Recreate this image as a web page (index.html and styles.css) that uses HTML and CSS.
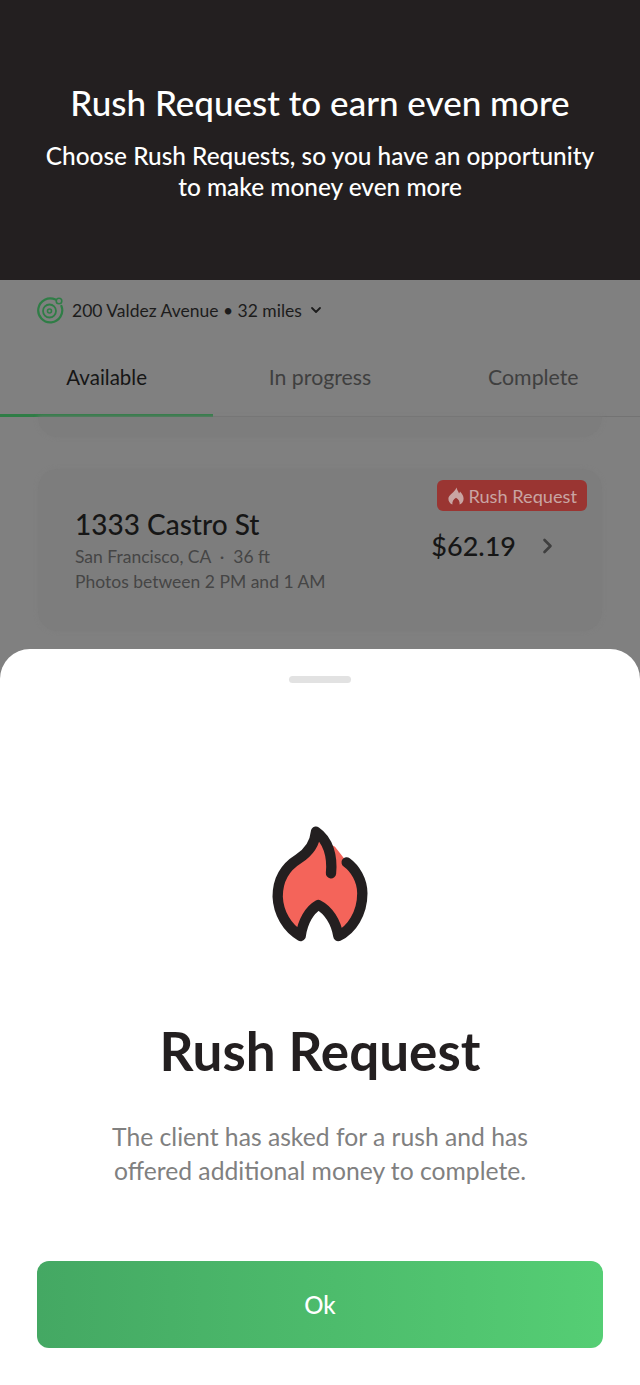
FILE: index.html
```html
<!DOCTYPE html>

<html>

<head>
  <meta charset="utf-8">
  <title>Rush Request</title>
  <link rel="stylesheet" href="styles.css">
</head>

<body>

  <div class="promo">
    <h1>Rush Request to earn even more</h1>
    <p>Choose Rush Requests, so you have an opportunity<br>to make money even more</p>
  </div>

  <div class="screen">
    <div class="location">
      <svg class="pin" width="28" height="28" viewBox="0 0 28 28" fill="none" stroke="#2f7d46">
        <path d="M19.5 3.6A12 12 0 1 0 25.4 10" stroke-width="2.2" stroke-linecap="round"/>
        <circle cx="13.5" cy="15" r="6.5" stroke-width="1.8"/>
        <circle cx="13.5" cy="15" r="2" stroke-width="1.6"/>
        <circle cx="23" cy="5" r="2.8" stroke-width="1.6"/>
      </svg>
      <span>200 Valdez Avenue • 32 miles</span>
      <svg width="12" height="12" viewBox="0 0 12 12" fill="none" stroke="#1c1c1c" stroke-width="1.8" stroke-linecap="round" stroke-linejoin="round">
        <path d="M2 4l4 4 4-4"/>
      </svg>
    </div>

    <div class="tabs">
      <div class="tab active">Available</div>
      <div class="tab">In progress</div>
      <div class="tab">Complete</div>
    </div>

    <div class="list">
      <div class="card-prev"></div>
      <div class="card">
        <div class="card-info">
          <h2>1333 Castro St</h2>
          <p>San Francisco, CA &nbsp;·&nbsp; 36 ft</p>
          <p>Photos between 2 PM and 1 AM</p>
        </div>
        <div class="card-side">
          <div class="badge">
            <svg width="16" height="18" viewBox="0 0 16 18" fill="#c9a5a3">
              <path d="M8.5 0.5C9 3.5 10.5 4 11 6.5C11.6 5.8 11.9 5.3 12 4.6C14.2 6.8 15.6 9.2 15.6 11.7C15.6 14.6 13.8 16.6 11.6 17.5C12 14.6 10.6 12.4 8 10.8C5.6 12.4 4 14.6 4.4 17.5C2 16.6 0.4 14.4 0.4 11.7C0.4 7.5 6.8 5.5 8.5 0.5Z"/>
            </svg>
            <span>Rush Request</span>
          </div>
          <div class="price-row">
            <span class="price">$62.19</span>
            <svg width="14" height="18" viewBox="0 0 14 18" fill="none" stroke="#3f3f3f" stroke-width="2.6" stroke-linecap="round" stroke-linejoin="round">
              <path d="M3.5 3l6 6-6 6"/>
            </svg>
          </div>
        </div>
      </div>
    </div>
  </div>

  <div class="sheet">
    <div class="handle"></div>
    <svg class="flame" width="140" height="150" viewBox="0 0 420 450" fill="none">
      <path d="M198 65C195 100 175 125 130 150C100 175 83 215 83 260C85 310 112 355 150 378C160 330 180 300 205 285C235 300 258 335 265 378C305 360 337 310 337 250C337 210 315 175 290 155L255 110L235 100Z" fill="#f4645a"/>
      <path d="M243 190C248 140 235 90 198 65C195 100 180 125 145 147C100 175 83 215 83 260C85 310 112 355 152 378C158 335 178 300 205 285C235 300 258 335 265 378C305 360 337 310 337 250C337 210 315 175 290 157" stroke="#231f20" stroke-width="31" stroke-linecap="round" stroke-linejoin="round"/>
    </svg>
    <h2>Rush Request</h2>
    <p>The client has asked for a rush and has<br>offered additional money to complete.</p>
    <button class="ok">Ok</button>
  </div>

</body>

</html>
```

FILE: styles.css
```css
body {
  margin: 0;
  padding: 0;
  height: 1385px;
  display: flex;
  flex-direction: column;
  overflow: hidden;
  background-color: #808080;
  font-family: "Lato", sans-serif;
  color: #1c1c1c;
}

h1,
h2,
p {
  margin: 0;
  font-weight: 400;
}

.promo {
  height: 280px;
  box-sizing: border-box;
  padding-top: 79px;
  background-color: #231f20;
  color: #ffffff;
  text-align: center;
}

.promo h1 {
  font-size: 35px;
  line-height: 46px;
  font-weight: 500;
}

.promo p {
  margin-top: 15px;
  font-size: 24.4px;
  line-height: 31px;
  font-weight: 500;
}

.screen {
  height: 369px;
  overflow: hidden;
}

.location {
  display: flex;
  align-items: center;
  height: 60px;
  padding-left: 36px;
  font-size: 17.5px;
  gap: 8px;
}

.tabs {
  display: flex;
  height: 76px;
  border-bottom: 1px solid #737373;
}

.tab {
  flex: 1;
  box-sizing: border-box;
  padding-top: 22px;
  text-align: center;
  font-size: 21.3px;
  line-height: 30px;
  color: #3f3f3f;
}

.tab.active {
  color: #161616;
  font-size: 20.5px;
  border-bottom: 3px solid #2f7d46;
  height: 77px;
}

.list {
  display: flex;
  flex-direction: column;
  gap: 32px;
  padding: 0 38px;
}

.card-prev {
  height: 20px;
  background-color: #7d7d7d;
  border-radius: 0 0 20px 20px;
  box-shadow: 0 0 4px #7d7d7d;
}

.card {
  display: flex;
  justify-content: space-between;
  height: 162px;
  box-sizing: border-box;
  padding: 11px 15px 0 37px;
  background-color: #7d7d7d;
  border-radius: 20px;
  box-shadow: 0 0 4px #7d7d7d;
}

.card-info {
  padding-top: 25px;
}

.card-info h2 {
  font-size: 28px;
  line-height: 38px;
  font-weight: 500;
  color: #161616;
}

.card-info p {
  font-size: 17.5px;
  line-height: 25px;
  color: #454545;
}

.card-info h2 + p {
  margin-top: 1px;
}

.card-side {
  display: flex;
  flex-direction: column;
  align-items: flex-end;
}

.badge {
  display: flex;
  align-items: center;
  gap: 4px;
  height: 31px;
  padding: 0 10px 0 11px;
  background-color: #9a3532;
  border-radius: 6px;
  color: #c9a5a3;
  font-size: 18.2px;
}

.price-row {
  display: flex;
  align-items: center;
  gap: 25px;
  margin-top: 15px;
  padding-right: 32px;
}

.price {
  font-size: 27px;
  line-height: 40px;
  font-weight: 500;
  color: #161616;
}

.sheet {
  flex: 1;
  display: flex;
  flex-direction: column;
  align-items: center;
  background-color: #ffffff;
  border-radius: 30px 30px 0 0;
  padding: 0 37px;
}

.handle {
  width: 62px;
  height: 7px;
  margin-top: 27px;
  border-radius: 4px;
  background-color: #e2e2e2;
}

.flame {
  margin-top: 127px;
}

.sheet h2 {
  margin-top: 57px;
  font-size: 53px;
  line-height: 68px;
  font-weight: 700;
  color: #231f20;
}

.sheet p {
  margin-top: 35px;
  text-align: center;
  font-size: 24.7px;
  line-height: 34px;
  color: #808080;
}

.ok {
  width: 566px;
  height: 87px;
  margin-top: 73px;
  border: 0;
  border-radius: 12px;
  background: linear-gradient(90deg, #44a863, #55ce74);
  color: #ffffff;
  font-family: inherit;
  font-size: 24px;
  font-weight: 500;
}
```
